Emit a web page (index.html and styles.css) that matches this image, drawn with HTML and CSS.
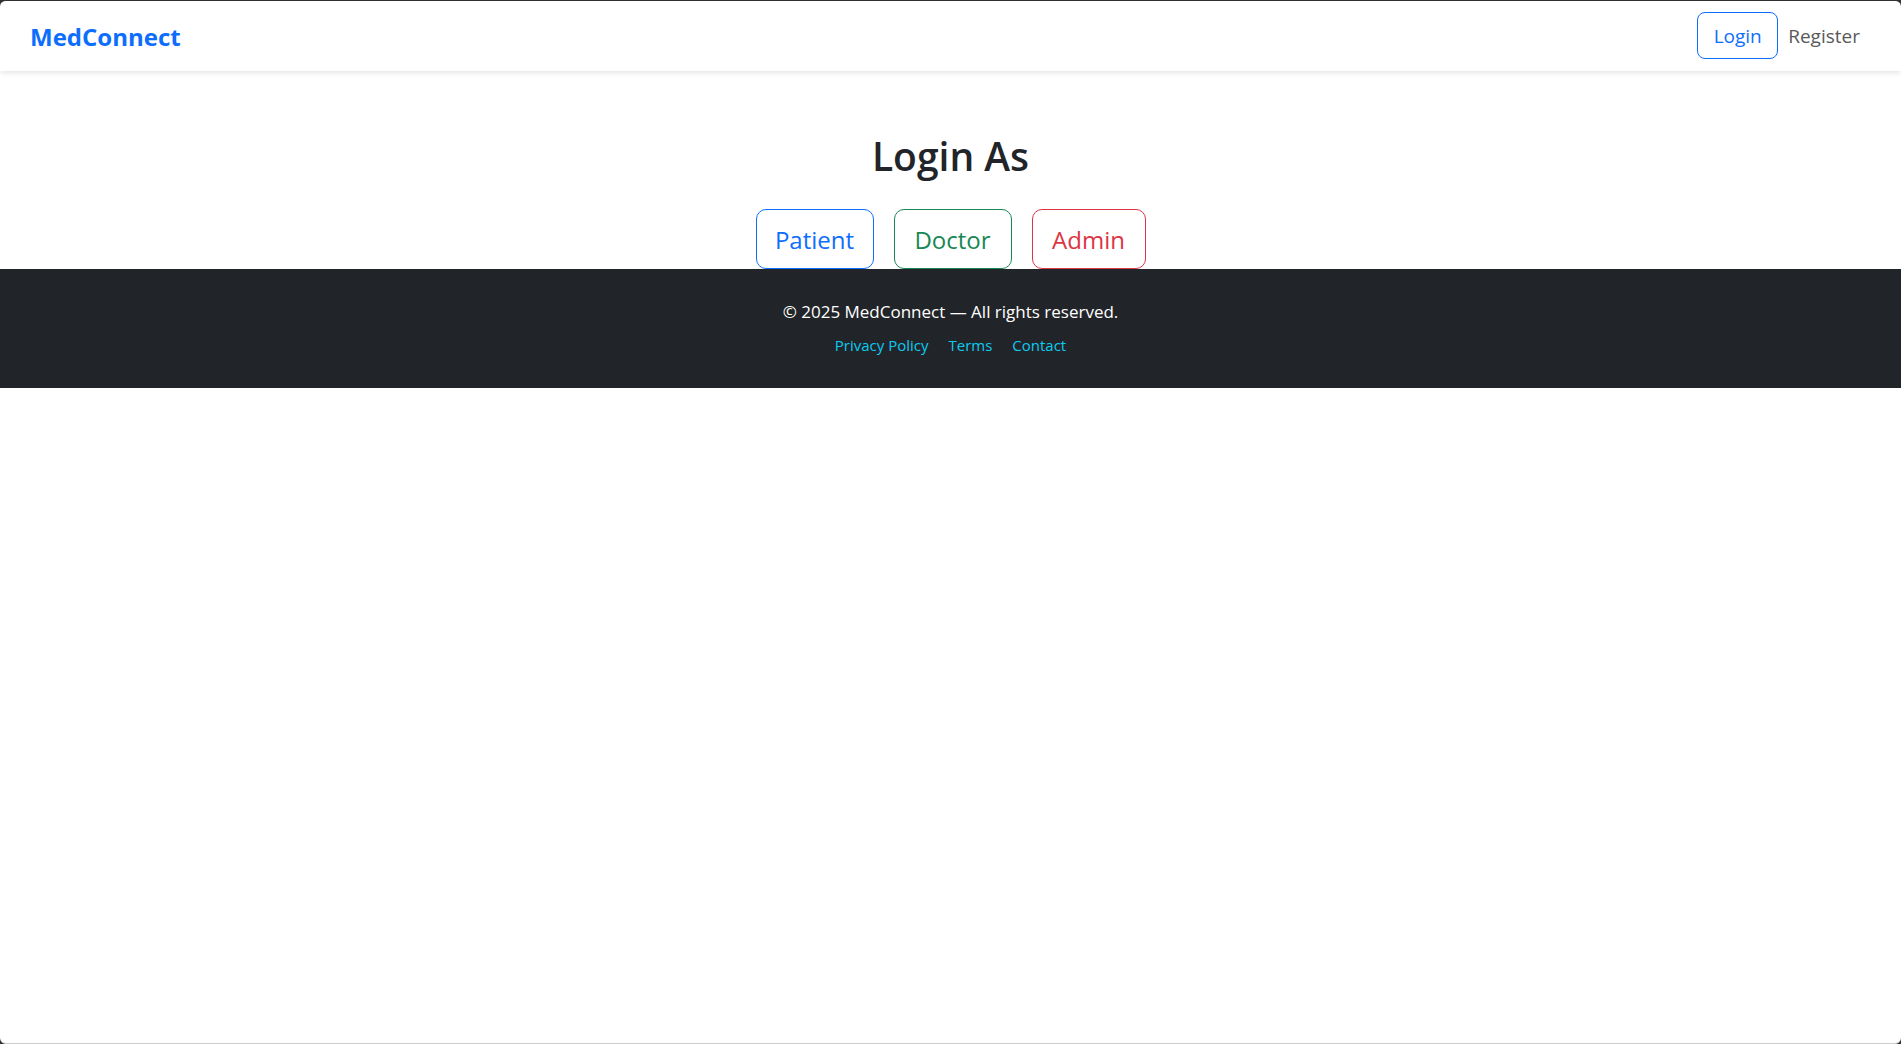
FILE: index.html
```html
<!DOCTYPE html>
<html lang="en">
<head>
<meta charset="utf-8">
<meta name="viewport" content="width=device-width, initial-scale=1">
<title>MedConnect</title>
<link rel="stylesheet" href="styles.css">
</head>
<body>
<header class="navbar">
  <a class="brand" href="#">MedConnect</a>
  <nav class="nav-links">
    <a class="btn btn-primary" href="#">Login</a>
    <a class="nav-link" href="#">Register</a>
  </nav>
</header>
<main class="login">
  <h1 class="title">Login As</h1>
  <div class="roles">
    <button type="button" class="btn btn-lg btn-primary">Patient</button>
    <button type="button" class="btn btn-lg btn-success">Doctor</button>
    <button type="button" class="btn btn-lg btn-danger btn-short">Admin</button>
  </div>
</main>
<footer class="footer">
  <p class="copyright">© 2025 MedConnect — All rights reserved.</p>
  <nav class="footer-links">
    <a href="#">Privacy Policy</a>
    <a href="#">Terms</a>
    <a href="#">Contact</a>
  </nav>
</footer>
</body>
</html>
```
FILE: styles.css
```css
* {
  box-sizing: border-box;
}

html {
  background: #302e30;
}

body {
  margin: 0;
  min-height: 100vh;
  border-top: 1px solid #302e30;
  border-bottom: 1px solid #cccccc;
  border-radius: 6px;
  overflow: hidden;
  background: #ffffff;
  color: #212529;
  font-family: "Segoe UI", "Open Sans", "Noto Sans", sans-serif;
  font-size: 19px;
  line-height: 30px;
}

a {
  text-decoration: none;
}

.navbar {
  display: flex;
  align-items: center;
  justify-content: space-between;
  height: 70px;
  padding: 0 41px 0 30px;
  box-shadow: 0 2px 5px rgba(0, 0, 0, 0.1);
}

.brand {
  padding-top: 2px;
  color: #0d6efd;
  font-size: 24px;
  font-weight: 700;
}

.nav-links {
  display: flex;
  align-items: center;
  gap: 10px;
  padding-bottom: 2px;
}

.nav-link {
  padding-top: 2px;
  color: #595959;
}

.btn {
  min-width: 81px;
  padding: 8px 12px 7px;
  border: 1px solid currentColor;
  border-radius: 8px;
  background: transparent;
  font: inherit;
  text-align: center;
}

.btn-primary {
  color: #0d6efd;
}

.btn-success {
  color: #198754;
}

.btn-danger {
  color: #dc3545;
}

.login {
  padding-top: 61px;
  text-align: center;
}

.title {
  margin: 0 0 29px;
  font-size: 39px;
  font-weight: 600;
  line-height: 48px;
}

.roles {
  display: flex;
  justify-content: center;
  gap: 20px;
}

.btn-lg {
  min-width: 118px;
  height: 60px;
  border-radius: 10px;
  font-size: 24px;
}

.btn-short {
  min-width: 114px;
}

.footer {
  padding: 28px 20px;
  background: #212529;
  color: #ffffff;
  font-size: 17px;
  text-align: center;
}

.copyright {
  margin: 0 0 3px;
}

.footer-links {
  display: flex;
  justify-content: center;
  gap: 20px;
  font-size: 15px;
}

.footer-links a {
  color: #0dcaf0;
}
```
